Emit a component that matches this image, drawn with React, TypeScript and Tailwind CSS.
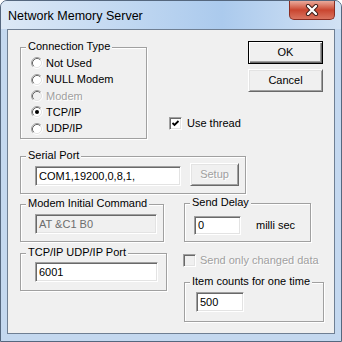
import React from 'react'

const Radio = ({ checked, disabled }: { checked?: boolean; disabled?: boolean }) => (
  <svg width="12" height="12" viewBox="0 0 12 12" className="shrink-0">
    <circle cx="6" cy="6" r="4.5" fill={disabled ? '#f0f0f0' : '#fff'} />
    <path d="M2.11 9.89 A5.5 5.5 0 0 1 9.89 2.11" fill="none" stroke="#a0a0a0" />
    <path d="M2.82 9.18 A4.5 4.5 0 0 1 9.18 2.82" fill="none" stroke="#696969" />
    <path d="M9.89 2.11 A5.5 5.5 0 0 1 2.11 9.89" fill="none" stroke="#fff" />
    <path d="M9.18 2.82 A4.5 4.5 0 0 1 2.82 9.18" fill="none" stroke="#e3e3e3" />
    {checked && <circle cx="6" cy="6" r="2" fill="#000" />}
  </svg>
)

const CheckBox = ({ checked, disabled }: { checked?: boolean; disabled?: boolean }) => (
  <div
    className={`w-[13px] h-[13px] shrink-0 border border-t-[#a0a0a0] border-l-[#a0a0a0] border-r-white border-b-white shadow-[inset_1px_1px_0_#696969,inset_-1px_-1px_0_#e3e3e3] ${
      disabled ? 'bg-[#f0f0f0]' : 'bg-white'
    }`}
  >
    {checked && (
      <svg width="11" height="11" viewBox="0 0 11 11">
        <path d="M2.5 5 L4.5 7 L8.5 3" fill="none" stroke="#000" strokeWidth="1.8" />
      </svg>
    )}
  </div>
)

const Edit = ({ value, className, disabled }: { value: string; className: string; disabled?: boolean }) => (
  <div
    className={`flex items-center pl-[3px] border border-t-[#a0a0a0] border-l-[#a0a0a0] border-r-white border-b-white shadow-[inset_1px_1px_0_#696969,inset_-1px_-1px_0_#e3e3e3] ${
      disabled ? 'bg-[#f0f0f0] text-[#6d6d6d]' : 'bg-white text-black'
    } ${className}`}
  >
    {value}
  </div>
)

const Group = ({ label, className, children }: { label: string; className: string; children?: React.ReactNode }) => (
  <div className={`border border-[#a0a0a0] shadow-[1px_1px_0_#fff,inset_1px_1px_0_#fff] ${className}`}>
    <div className="-mt-[8px] ml-[5px] px-[2px] w-fit h-[13px] leading-[13px] bg-[#f0f0f0]">{label}</div>
    {children}
  </div>
)

const radios = [
  { label: 'Not Used', h: 'h-[16px]' },
  { label: 'NULL Modem', h: 'h-[17px]' },
  { label: 'Modem', h: 'h-[16px]', disabled: true },
  { label: 'TCP/IP', h: 'h-[16px]', checked: true },
  { label: 'UDP/IP', h: 'h-[17px]' },
]

export default function App() {
  return (
    <div className="w-[342px] h-[342px] font-['Liberation_Sans',Arial,sans-serif] text-[11px] text-black">
      <div className="w-full h-full flex flex-col border border-[#55677e] rounded-t-[7px] bg-[#c4d8ef] overflow-hidden">
        <div className="h-[28px] flex items-start bg-gradient-to-r from-[#dde9f6] via-[#abcaed] via-65% to-[#d2e2f4]">
          <div className="ml-[7px] mt-[7px] text-[12.5px] leading-[16px] text-black">Network Memory Server</div>
          <div className="ml-auto mr-[6px] w-[46px] h-[19px] rounded-b-[5px] border border-t-0 border-[#8a2d22] bg-gradient-to-b from-[#e9a99b] via-[#c9452f] to-[#d9735f] flex items-center justify-center">
            <svg width="14" height="12" viewBox="0 0 14 12">
              <path d="M3 2 L11 10 M11 2 L3 10" stroke="#3a1a16" strokeWidth="4.2" strokeLinecap="round" />
              <path d="M3 2 L11 10 M11 2 L3 10" stroke="#fff" strokeWidth="2.4" strokeLinecap="round" />
            </svg>
          </div>
        </div>

        <div className="mx-[6px] w-[328px] h-[305px] border border-[#6f7f93] bg-[#f0f0f0] flex flex-col">
          {/* row 1 */}
          <div className="flex items-start">
            <Group label="Connection Type" className="ml-[12px] mt-[17px] w-[127px] h-[92px]">
              <div className="mt-[2px] flex flex-col">
                {radios.map((r) => (
                  <div key={r.label} className={`${r.h} flex items-center gap-[3px] ml-[10px]`}>
                    <Radio checked={r.checked} disabled={r.disabled} />
                    <span className={r.disabled ? 'text-[#a0a0a0] [text-shadow:1px_1px_0_#fff]' : ''}>{r.label}</span>
                  </div>
                ))}
              </div>
            </Group>
            <div className="ml-[22px] mt-[87px] h-[13px] flex items-center gap-[5px]">
              <CheckBox checked />
              <span>Use thread</span>
            </div>
            <div className="ml-auto mr-[11px] mt-[11px] flex flex-col gap-[5px]">
              <button className="w-[75px] h-[23px] border border-black bg-[#f0f0f0] shadow-[inset_1px_1px_0_#fff,inset_-1px_-1px_0_#696969,inset_-2px_-2px_0_#a0a0a0]">
                OK
              </button>
              <button className="w-[75px] h-[23px] border border-t-white border-l-white border-r-[#696969] border-b-[#696969] bg-[#f0f0f0] shadow-[inset_1px_1px_0_#e3e3e3,inset_-1px_-1px_0_#a0a0a0]">
                Cancel
              </button>
            </div>
          </div>

          {/* row 2 */}
          <Group label="Serial Port" className="ml-[12px] mt-[17px] w-[226px] h-[38px]">
            <div className="flex items-start ml-[14px]">
              <Edit value="COM1,19200,0,8,1," className="mt-[4px] w-[146px] h-[20px]" />
              <button className="ml-[9px] mt-[1px] w-[49px] h-[23px] border border-t-white border-l-white border-r-[#696969] border-b-[#696969] bg-[#f0f0f0] shadow-[inset_1px_1px_0_#e3e3e3,inset_-1px_-1px_0_#a0a0a0] text-[#a0a0a0] [text-shadow:1px_1px_0_#fff]">
                Setup
              </button>
            </div>
          </Group>

          {/* row 3 */}
          <div className="mt-[9px] flex items-start">
            <Group label="Modem Initial Command" className="ml-[12px] mt-[1px] w-[144px] h-[38px]">
              <Edit value="AT &C1 B0" disabled className="ml-[14px] mt-[4px] w-[122px] h-[20px]" />
            </Group>
            <Group label="Send Delay" className="ml-[20px] w-[127px] h-[39px]">
              <div className="flex items-start">
                <Edit value="0" className="ml-[9px] mt-[7px] w-[47px] h-[19px]" />
                <span className="ml-[15px] mt-[10px] leading-[13px]">milli sec</span>
              </div>
            </Group>
          </div>

          {/* row 4 */}
          <div className="mt-[11px] flex items-start">
            <Group label="TCP/IP UDP/IP Port" className="ml-[12px] w-[147px] h-[38px]">
              <Edit value="6001" className="ml-[14px] mt-[3px] w-[123px] h-[20px]" />
            </Group>
            <div className="flex flex-col">
              <div className="ml-[16px] mt-[1px] h-[13px] flex items-center gap-[4px]">
                <CheckBox disabled />
                <span className="text-[#a0a0a0] [text-shadow:1px_1px_0_#fff]">Send only changed data</span>
              </div>
              <Group label="Item counts for one time" className="ml-[17px] mt-[15px] w-[140px] h-[40px]">
                <Edit value="500" className="ml-[11px] mt-[4px] w-[48px] h-[20px]" />
              </Group>
            </div>
          </div>
        </div>
      </div>
    </div>
  )
}
